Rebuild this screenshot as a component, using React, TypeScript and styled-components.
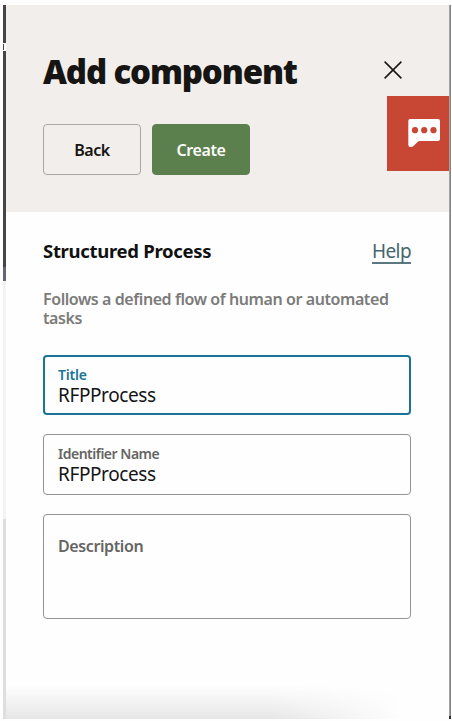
import React from "react";
import styled, { createGlobalStyle } from "styled-components";

const GlobalStyle = createGlobalStyle`
  * { box-sizing: border-box; }
  body { margin: 0; background: #fefefe; font-family: "Noto Sans", "Open Sans", sans-serif; }
`;

const Page = styled.main`
  display: flex;
  width: 452px;
  height: 721px;
  padding: 5px 0 2px 3px;
  overflow: hidden;
`;

const PageEdge = styled.div`
  display: flex;
  flex-direction: column;
  flex: none;
  width: 3px;
`;

const EdgeSegment = styled.div<{ $height: number; $color: string; $width?: number }>`
  flex: none;
  height: ${(p) => p.$height}px;
  width: ${(p) => p.$width ?? 2.5}px;
  background: ${(p) => p.$color};
`;

const Drawer = styled.section`
  position: relative;
  display: flex;
  flex-direction: column;
  flex: none;
  width: 443px;
  background: #fefefe;
`;

const RightEdge = styled.div`
  flex: none;
  width: 2px;
  background: linear-gradient(90deg, #a2a2a2 0 50%, #858585 50%);
  border-bottom: 3px solid #303030;
`;

const Header = styled.header`
  display: flex;
  flex-direction: column;
  gap: 34px;
  height: 207px;
  padding: 45px 47px 0 37px;
  background: #f1eeeb;
`;

const TitleRow = styled.div`
  display: flex;
  align-items: center;
  justify-content: space-between;
  height: 40px;
`;

const Heading = styled.h1`
  margin: 0;
  padding-top: 3px;
  font-size: 33px;
  line-height: 40px;
  font-weight: 900;
  letter-spacing: -1.15px;
  color: #161513;
  white-space: nowrap;
`;

const IconButton = styled.button`
  display: flex;
  padding: 0;
  border: 0;
  background: none;
`;

const Actions = styled.div`
  display: flex;
  gap: 11px;
`;

const Button = styled.button<{ $primary?: boolean }>`
  width: 98px;
  height: 51px;
  padding: 0;
  border: 1px solid ${(p) => (p.$primary ? "#5c7f4e" : "#aaa8a5")};
  border-radius: 4px;
  background: ${(p) => (p.$primary ? "#5c7f4e" : "transparent")};
  color: ${(p) => (p.$primary ? "#fbfdf9" : "#161513")};
  font: 600 16px/22px "Noto Sans", "Open Sans", sans-serif;
  letter-spacing: ${(p) => (p.$primary ? -0.4 : -0.5)}px;
`;

const ChatTab = styled.button`
  position: absolute;
  top: 91px;
  right: 0;
  display: flex;
  width: 62px;
  height: 75px;
  padding: 23px 0 0 21px;
  border: 0;
  background: #c74634;
`;

const Content = styled.div`
  display: flex;
  flex-direction: column;
  padding: 25px 38px 0 37px;
`;

const SectionRow = styled.div`
  display: flex;
  justify-content: space-between;
  height: 28px;
`;

const SectionTitle = styled.h2`
  margin: 0;
  font-size: 18.5px;
  line-height: 28px;
  font-weight: 700;
  letter-spacing: -0.3px;
  color: #111;
`;

const HelpLink = styled.a`
  height: 27px;
  border-bottom: 2px solid #5b7880;
  color: #44666e;
  font-size: 19px;
  line-height: 28px;
  letter-spacing: -0.6px;
`;

const Summary = styled.p`
  margin: 25px 0 27px;
  font-size: 16px;
  line-height: 19px;
  font-weight: 600;
  letter-spacing: -0.42px;
  color: #7b7b7a;
`;

const Field = styled.label<{ $focused?: boolean; $height: number }>`
  display: flex;
  flex-direction: column;
  height: ${(p) => p.$height}px;
  margin-bottom: 19px;
  padding: ${(p) => (p.$focused ? "9px 13px" : "10px 14px")};
  border: ${(p) => (p.$focused ? "2px solid #1b7397" : "1px solid #939393")};
  border-radius: 4px;
`;

const FieldLabel = styled.span<{ $focused?: boolean }>`
  height: 18px;
  font-size: 14px;
  line-height: 18px;
  font-weight: 600;
  letter-spacing: ${(p) => (p.$focused ? -0.2 : -0.5)}px;
  color: ${(p) => (p.$focused ? "#1b7397" : "#656564")};
`;

const FieldInput = styled.input`
  width: 100%;
  height: 22px;
  padding: 0;
  border: 0;
  outline: 0;
  background: none;
  color: #151515;
  font: 400 19px/22px "Noto Sans", "Open Sans", sans-serif;
  letter-spacing: -0.4px;
`;

const Placeholder = styled.span`
  padding-top: 10px;
  font-size: 16px;
  line-height: 22px;
  font-weight: 600;
  letter-spacing: -0.4px;
  color: #656564;
`;

const BottomShade = styled.div`
  position: absolute;
  bottom: 0;
  left: 0;
  width: 400px;
  height: 34px;
  background: linear-gradient(#0000, #00000018);
  mask-image: linear-gradient(80deg, #000 65%, transparent 98%);
  pointer-events: none;
`;

const CloseIcon = () => (
  <svg width="18" height="18" viewBox="0 0 18 18" fill="none" stroke="#161513" strokeWidth="1.5">
    <path d="M.6.6 17.4 17.4M17.4.6.6 17.4" />
  </svg>
);

const ChatIcon = () => (
  <svg width="32" height="28" viewBox="0 0 32 28">
    <path
      fill="#fff"
      d="M2 0H30Q32 0 32 2V20Q32 22 30 22H12Q10.5 22 9.3 23.3L5.5 27Q4.5 28 2.5 28Q.3 28 .3 26V2Q.3 0 2 0Z"
    />
    <g fill="#c74634">
      <circle cx="7" cy="11.2" r="3.1" />
      <circle cx="16.2" cy="11.2" r="3.1" />
      <circle cx="25.5" cy="11.2" r="3.1" />
    </g>
  </svg>
);

export default function App() {
  return (
    <>
      <GlobalStyle />
      <Page>
        <PageEdge>
          <EdgeSegment $height={38} $color="#454547" />
          <EdgeSegment $height={1} $color="#eeeeee" $width={2} />
          <EdgeSegment $height={6} $color="#454547" $width={1} />
          <EdgeSegment $height={1} $color="#eeeeee" $width={2} />
          <EdgeSegment $height={216} $color="#454547" />
          <EdgeSegment $height={14} $color="#65666f" />
          <EdgeSegment $height={238} $color="#f3f3f2" />
          <EdgeSegment $height={200} $color="#dededc" />
        </PageEdge>
        <Drawer>
          <Header>
            <TitleRow>
              <Heading>Add component</Heading>
              <IconButton aria-label="Close"><CloseIcon /></IconButton>
            </TitleRow>
            <Actions>
              <Button>Back</Button>
              <Button $primary>Create</Button>
            </Actions>
          </Header>
          <ChatTab aria-label="Chat"><ChatIcon /></ChatTab>
          <Content>
            <SectionRow>
              <SectionTitle>Structured Process</SectionTitle>
              <HelpLink>Help</HelpLink>
            </SectionRow>
            <Summary>Follows a defined flow of human or automated tasks</Summary>
            <Field $focused $height={60}>
              <FieldLabel $focused>Title</FieldLabel>
              <FieldInput defaultValue="RFPProcess" />
            </Field>
            <Field $height={61}>
              <FieldLabel>Identifier Name</FieldLabel>
              <FieldInput defaultValue="RFPProcess" />
            </Field>
            <Field $height={105}>
              <Placeholder>Description</Placeholder>
            </Field>
          </Content>
          <BottomShade />
        </Drawer>
        <RightEdge />
      </Page>
    </>
  );
}
